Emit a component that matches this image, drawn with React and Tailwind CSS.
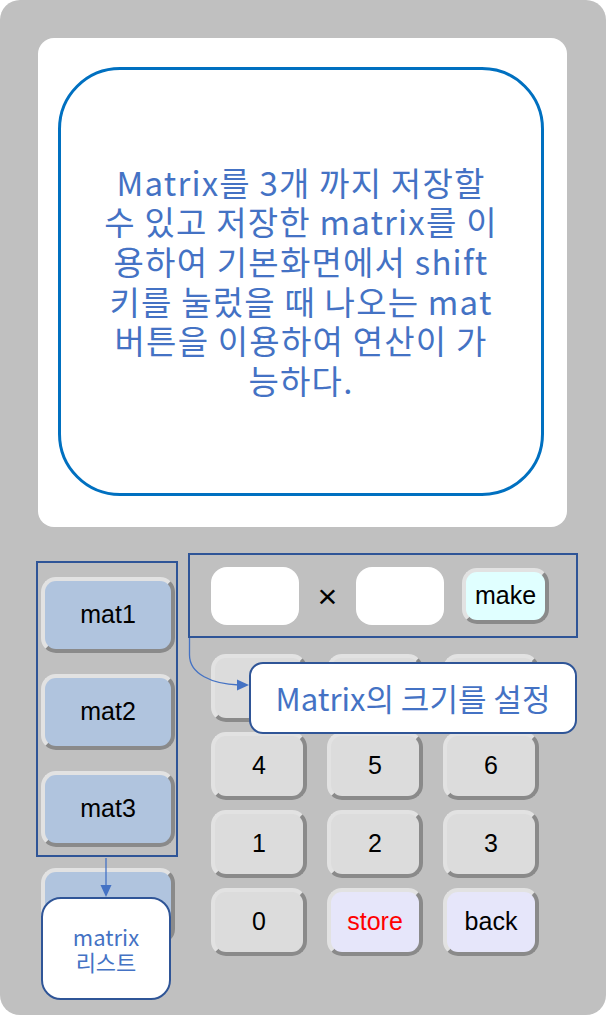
const btn =
    "flex items-center justify-center rounded-[15px] border-4 border-t-[#e2e2e2] border-l-[#e2e2e2] border-r-[#8a8a8a] border-b-[#8a8a8a] text-[25px]";

const MatButton = ({ label }) => (
    <div className={`${btn} w-[134px] h-[76px] bg-[#b0c4de] text-black`}>{label}</div>
);

const Key = ({ label, bg = "bg-[#dcdcdc]", color = "text-black" }) => (
    <div className={`${btn} w-[96px] h-[68px] ${bg} ${color}`}>{label}</div>
);

const lines = [
    "Matrix를 3개 까지 저장할",
    "수 있고 저장한 matrix를 이",
    "용하여 기본화면에서 shift",
    "키를 눌렀을 때 나오는 mat",
    "버튼을 이용하여 연산이 가",
    "능하다.",
];

const App = () => {
    return (
        <div className="relative w-[606px] h-[1015px] bg-[#c0c0c0] rounded-[20px] overflow-hidden font-['Liberation_Sans',sans-serif]">
            {/* screen */}
            <div className="ml-[38px] pt-[38px]">
                <div className="w-[529px] h-[489px] bg-white rounded-[16px] pt-[29px] pl-[20px]">
                    <div className="w-[486px] h-[429px] border-[3px] border-[#0070c0] rounded-[62px] flex flex-col items-center justify-center font-['Noto_Sans_CJK_KR',sans-serif] text-[33px] leading-[39.6px] tracking-[1.2px] text-[#4472c4]">
                        {lines.map((l) => (
                            <div key={l} className="whitespace-nowrap">
                                {l}
                            </div>
                        ))}
                    </div>
                </div>
            </div>

            {/* keypad area */}
            <div className="flex items-start">
                <div className="ml-[41px] mt-[50px] flex flex-col gap-[21px]">
                    <MatButton label="mat1" />
                    <MatButton label="mat2" />
                    <MatButton label="mat3" />
                    <MatButton label="" />
                </div>

                <div className="ml-[36px] mt-[40px]">
                    <div className="flex items-center h-[58px]">
                        <div className="w-[88px] h-[58px] bg-white rounded-[16px]"></div>
                        <div className="w-[57px] text-center text-[34px] leading-none text-black">×</div>
                        <div className="w-[88px] h-[58px] bg-white rounded-[16px]"></div>
                        <div className={`${btn} ml-[18px] w-[87px] h-[56px] bg-[#e0ffff] text-black`}>make</div>
                    </div>

                    <div className="mt-[29px] grid grid-cols-[96px_96px_96px] gap-x-[20px] gap-y-[10px]">
                        <Key label="" />
                        <Key label="" />
                        <Key label="" />
                        <Key label="4" />
                        <Key label="5" />
                        <Key label="6" />
                        <Key label="1" />
                        <Key label="2" />
                        <Key label="3" />
                        <Key label="0" />
                        <Key label="store" bg="bg-[#e6e6fa]" color="text-[#ff0000]" />
                        <Key label="back" bg="bg-[#e6e6fa]" />
                    </div>
                </div>
            </div>

            {/* annotations */}
            <div className="absolute left-[36px] top-[561px] w-[142px] h-[296px] border-2 border-[#2f5597]"></div>
            <div className="absolute left-[188px] top-[553px] w-[390px] h-[85px] border-2 border-[#2f5597]"></div>

            <svg className="absolute left-0 top-0" width="606" height="1015">
                <path d="M189.5 638 L189.5 655 C189.5 674 212 684 239 685" fill="none" stroke="#4472c4" strokeWidth="1.3" />
                <polygon points="249,685 237,679.5 237,690.5" fill="#4472c4" />
                <path d="M106 858 L106 886" fill="none" stroke="#4472c4" strokeWidth="1.3" />
                <polygon points="106,897 100.5,885 111.5,885" fill="#4472c4" />
            </svg>

            <div className="absolute left-[249px] top-[662px] w-[328px] h-[72px] bg-white border-2 border-[#2f5597] rounded-[14px] flex items-center justify-center font-['Noto_Sans_CJK_KR',sans-serif] text-[31px] text-[#4472c4] whitespace-nowrap">
                Matrix의 크기를 설정
            </div>

            <div className="absolute left-[41px] top-[897px] w-[130px] h-[103px] bg-white border-2 border-[#2f5597] rounded-[20px] flex flex-col items-center justify-center font-['Noto_Sans_CJK_KR',sans-serif] text-[22px] leading-[25px] text-[#4472c4]">
                <div>matrix</div>
                <div>리스트</div>
            </div>
        </div>
    );
};

export default App;
